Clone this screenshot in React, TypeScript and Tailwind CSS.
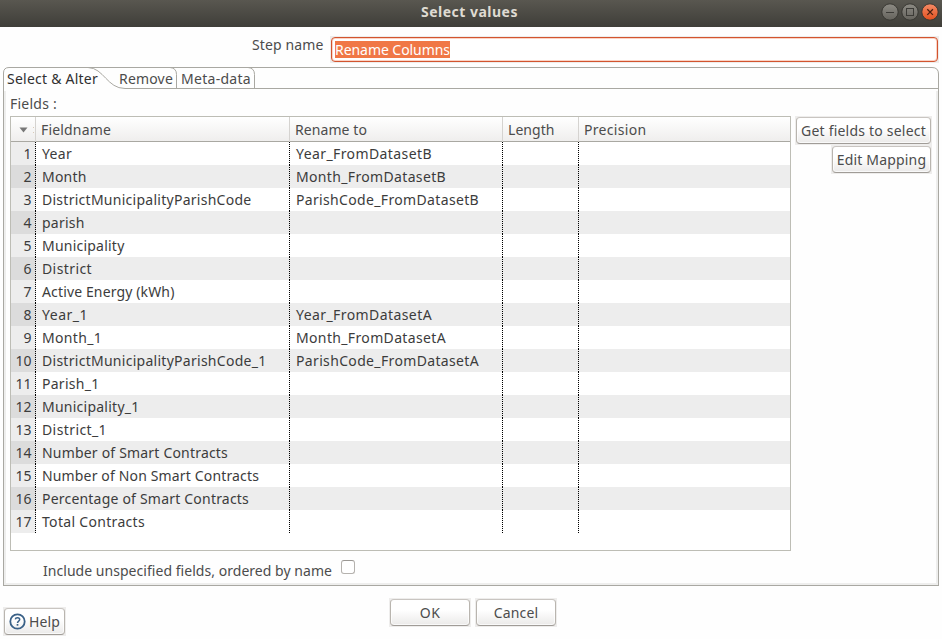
import { useLayoutEffect, useRef, useState } from "react";

// Single-line label whose letter spacing is tuned so it spans `w` pixels.
function Label({ text, w, className = "" }: { text: string; w: number; className?: string }) {
  const ref = useRef<HTMLSpanElement>(null);
  const [spacing, setSpacing] = useState(0);
  useLayoutEffect(() => {
    const el = ref.current;
    if (!el) return;
    const natural = el.getBoundingClientRect().width - spacing * text.length;
    setSpacing((w - natural) / text.length);
  }, [text, w]);
  return (
    <span ref={ref} className={`inline-block whitespace-pre ${className}`} style={{ letterSpacing: `${spacing}px` }}>
      {text}
    </span>
  );
}

type Cell = [string, number];
type Row = { field: Cell; rename?: Cell };

const rows: Row[] = [
  { field: ["Year", 30], rename: ["Year_FromDatasetB", 136] },
  { field: ["Month", 44.5], rename: ["Month_FromDatasetB", 150] },
  { field: ["DistrictMunicipalityParishCode", 209.5], rename: ["ParishCode_FromDatasetB", 183] },
  { field: ["parish", 42.5] },
  { field: ["Municipality", 82.5] },
  { field: ["District", 50] },
  { field: ["Active Energy (kWh)", 132.5] },
  { field: ["Year_1", 46], rename: ["Year_FromDatasetA", 136] },
  { field: ["Month_1", 60], rename: ["Month_FromDatasetA", 150] },
  { field: ["DistrictMunicipalityParishCode_1", 224.5], rename: ["ParishCode_FromDatasetA", 183] },
  { field: ["Parish_1", 57.5] },
  { field: ["Municipality_1", 97.5] },
  { field: ["District_1", 65] },
  { field: ["Number of Smart Contracts", 186] },
  { field: ["Number of Non Smart Contracts", 217] },
  { field: ["Percentage of Smart Contracts", 207] },
  { field: ["Total Contracts", 103] },
];

const columns = "grid grid-cols-[25px_254px_213px_76px_211px]";
const dots =
  "bg-[repeating-linear-gradient(to_bottom,#000_0px,#000_1px,transparent_1px,transparent_2px)] bg-[length:1px_100%] bg-right bg-no-repeat";

function Button({ children, className = "" }: { children: React.ReactNode; className?: string }) {
  return (
    <div className={`bg-[#eeedec] p-px ${className}`}>
      <button className="flex h-[27px] w-full items-center justify-center rounded-[4px] border border-[#b9b5af] border-t-[#c9c5c1] border-b-[#a09c97] bg-linear-to-b from-white from-40% to-[#ebeae9] leading-[23px] text-[#4c4c4c] shadow-[inset_0_0_0_1px_rgba(255,255,255,.7)]">
        {children}
      </button>
    </div>
  );
}

function TitleBar() {
  return (
    <header className="relative flex h-[27px] shrink-0 items-start justify-center bg-linear-to-b from-[#595750] to-[#3f3e39] pr-[3px] font-bold leading-[23px] text-[#dfdbd2]">
      <Label text="Select values" w={97} />
      <svg className="absolute right-0 top-0" width="64" height="27" viewBox="878 0 64 27" fill="none">
        <defs>
          <linearGradient id="dark" x1="0" y1="0" x2="0" y2="1">
            <stop offset="0" stopColor="#8d8b84" />
            <stop offset="1" stopColor="#65635d" />
          </linearGradient>
          <linearGradient id="close" x1="0" y1="0" x2="0" y2="1">
            <stop offset="0" stopColor="#f58b66" />
            <stop offset="1" stopColor="#e2501f" />
          </linearGradient>
        </defs>
        <circle cx="890" cy="12" r="8.2" fill="url(#dark)" stroke="#383732" />
        <circle cx="910" cy="12" r="8.2" fill="url(#dark)" stroke="#383732" />
        <circle cx="930" cy="12" r="8.2" fill="url(#close)" stroke="#383732" />
        <path d="M886 12.5h8" stroke="#3c3b37" />
        <rect x="906.5" y="8.5" width="7" height="7" stroke="#3c3b37" />
        <path d="M927.3 9.3l5.6 5.6M932.9 9.3l-5.6 5.6" stroke="#4a2011" strokeWidth="1.3" />
      </svg>
    </header>
  );
}

function TabBar() {
  return (
    <div className="relative flex h-[24px] pl-[4px] leading-[22px] text-[#4c4c4c]">
      <svg className="absolute left-0 top-0" width="936" height="24" fill="none" stroke="#a9a8a2">
        <path d="M0.5 24V6Q0.5 0.5 6 0.5H929Q935.5 0.5 935.5 7V24" />
        <path d="M85 0.5C101 1 104 21.5 122 21.5H935" />
        <path d="M167 0.5Q173.5 1 173.5 7.5V21.5M245 0.5Q251.5 1 251.5 7.5V21.5" />
      </svg>
      <Label text="Select & Alter" w={91} className="relative mr-[21px] pt-px text-[#303030]" />
      <Label text="Remove" w={54} className="relative mr-[8px] pt-px" />
      <Label text="Meta-data" w={70} className="relative pt-px" />
    </div>
  );
}

function FieldTable() {
  return (
    <div className="h-[435px] w-[781px] border border-[#bdbdb5] bg-white">
      <div className={`${columns} h-[25px] border-b border-[#a9a8a2] bg-linear-to-b from-white to-[#efeeed] leading-[25px] text-[#4c4c4c]`}>
        <div className="relative flex items-center border-r border-[#d5d3d0] pl-[8px] pt-px">
          <svg width="9" height="6" viewBox="0 0 9 6">
            <path d="M0.5 0.5h8L4.5 5.5z" fill="#777" />
          </svg>
          <span className="ml-auto mr-px flex flex-col gap-[4px]">
            <i className="block size-px bg-[#d9c9b8]" />
            <i className="block size-px bg-[#d9c9b8]" />
          </span>
        </div>
        <div className="border-r border-[#d5d3d0] pl-[5px]"><Label text="Fieldname" w={70} /></div>
        <div className="border-r border-[#d5d3d0] pl-[5px]"><Label text="Rename to" w={72} /></div>
        <div className="border-r border-[#d5d3d0] pl-[5px]"><Label text="Length" w={46.5} /></div>
        <div className="pl-[5px]"><Label text="Precision" w={62.5} /></div>
      </div>
      {rows.map((row, i) => (
        <div key={row.field[0]} className={`${columns} h-[23px] leading-[23px] text-[#3c3c3c] ${i % 2 ? "bg-[#ededed]" : "bg-white"}`}>
          <div className={`${dots} pr-[4.5px] text-right ${i % 2 ? "bg-[#dcdcdc]" : "bg-[#ededed]"}`}>{i + 1}</div>
          <div className={`${dots} pl-[6px]`}><Label text={row.field[0]} w={row.field[1]} /></div>
          <div className={`${dots} pl-[6px]`}>{row.rename && <Label text={row.rename[0]} w={row.rename[1]} />}</div>
          <div className={dots} />
          <div />
        </div>
      ))}
    </div>
  );
}

export default function App() {
  return (
    <div className="flex h-[639px] w-[942px] flex-col overflow-hidden bg-[#fefefe] font-['Noto_Sans',sans-serif] text-[14px] text-[#4c4c4c]">
      <TitleBar />
      <div className="flex h-[40px] shrink-0 pl-[252px] pt-[9px]">
        <Label text="Step name" w={71.5} className="mr-[6.5px] leading-[18px]" />
        <div className="h-[27px] w-[609px] bg-[#eeedec] p-px">
          <div className="flex h-[25px] items-center rounded-[4px] border border-[#d2542f] bg-white pl-[3px] shadow-[inset_0_0_0_1px_#fbd3c5]">
            <span className="h-[17px] w-[115px] bg-[#f07746] leading-[17px] text-white">
              <Label text="Rename Columns" w={115} />
            </span>
          </div>
        </div>
      </div>
      <main className="ml-[3px] flex h-[519px] w-[936px] shrink-0 flex-col">
        <TabBar />
        <section className="flex grow flex-col border border-t-0 border-[#a9a8a2] shadow-[inset_2px_-2px_0_#eeeeed,inset_-2px_0_0_#eeeeed]">
          <Label text="Fields :" w={47} className="ml-[6px] h-[25px] self-start leading-[26px]" />
          <div className="flex pl-[6px]">
            <FieldTable />
            <div className="ml-[4px] flex w-[137px] flex-col items-end">
              <Button className="w-[137px]"><Label text="Get fields to select" w={125} /></Button>
              <Button className="w-[101px]"><Label text="Edit Mapping" w={89.5} /></Button>
            </div>
          </div>
          <div className="flex pl-[39px]">
            <Label text="Include unspecified fields, ordered by name" w={289} className="pt-[8px] leading-[23px]" />
            <span className="ml-[9px] mt-[9px] size-[14px] rounded-[3px] border border-[#b5b2ae] border-t-[#9b9894] bg-white" />
          </div>
        </section>
      </main>
      <footer className="flex grow pl-[3px]">
        <Button className="mt-[21px] h-[29px] w-[63px]">
          <svg className="mr-[3px]" width="17" height="17" viewBox="0 0 17 17" fill="none" stroke="#3a6187">
            <circle cx="8.5" cy="8.5" r="7.2" strokeWidth="1.8" />
            <path d="M6.3 6.4C6.5 4.2 10.7 4.2 10.7 6.6C10.7 8.2 8.5 8.2 8.5 10" strokeWidth="1.5" />
            <path d="M8.5 11v1.7" strokeWidth="1.7" />
          </svg>
          <Label text="Help" w={31} />
        </Button>
        <Button className="ml-[323px] mt-[12px] h-[29px] w-[82px]"><Label text="OK" w={20.5} /></Button>
        <Button className="ml-[4px] mt-[12px] h-[29px] w-[82px]"><Label text="Cancel" w={44.5} /></Button>
      </footer>
    </div>
  );
}
